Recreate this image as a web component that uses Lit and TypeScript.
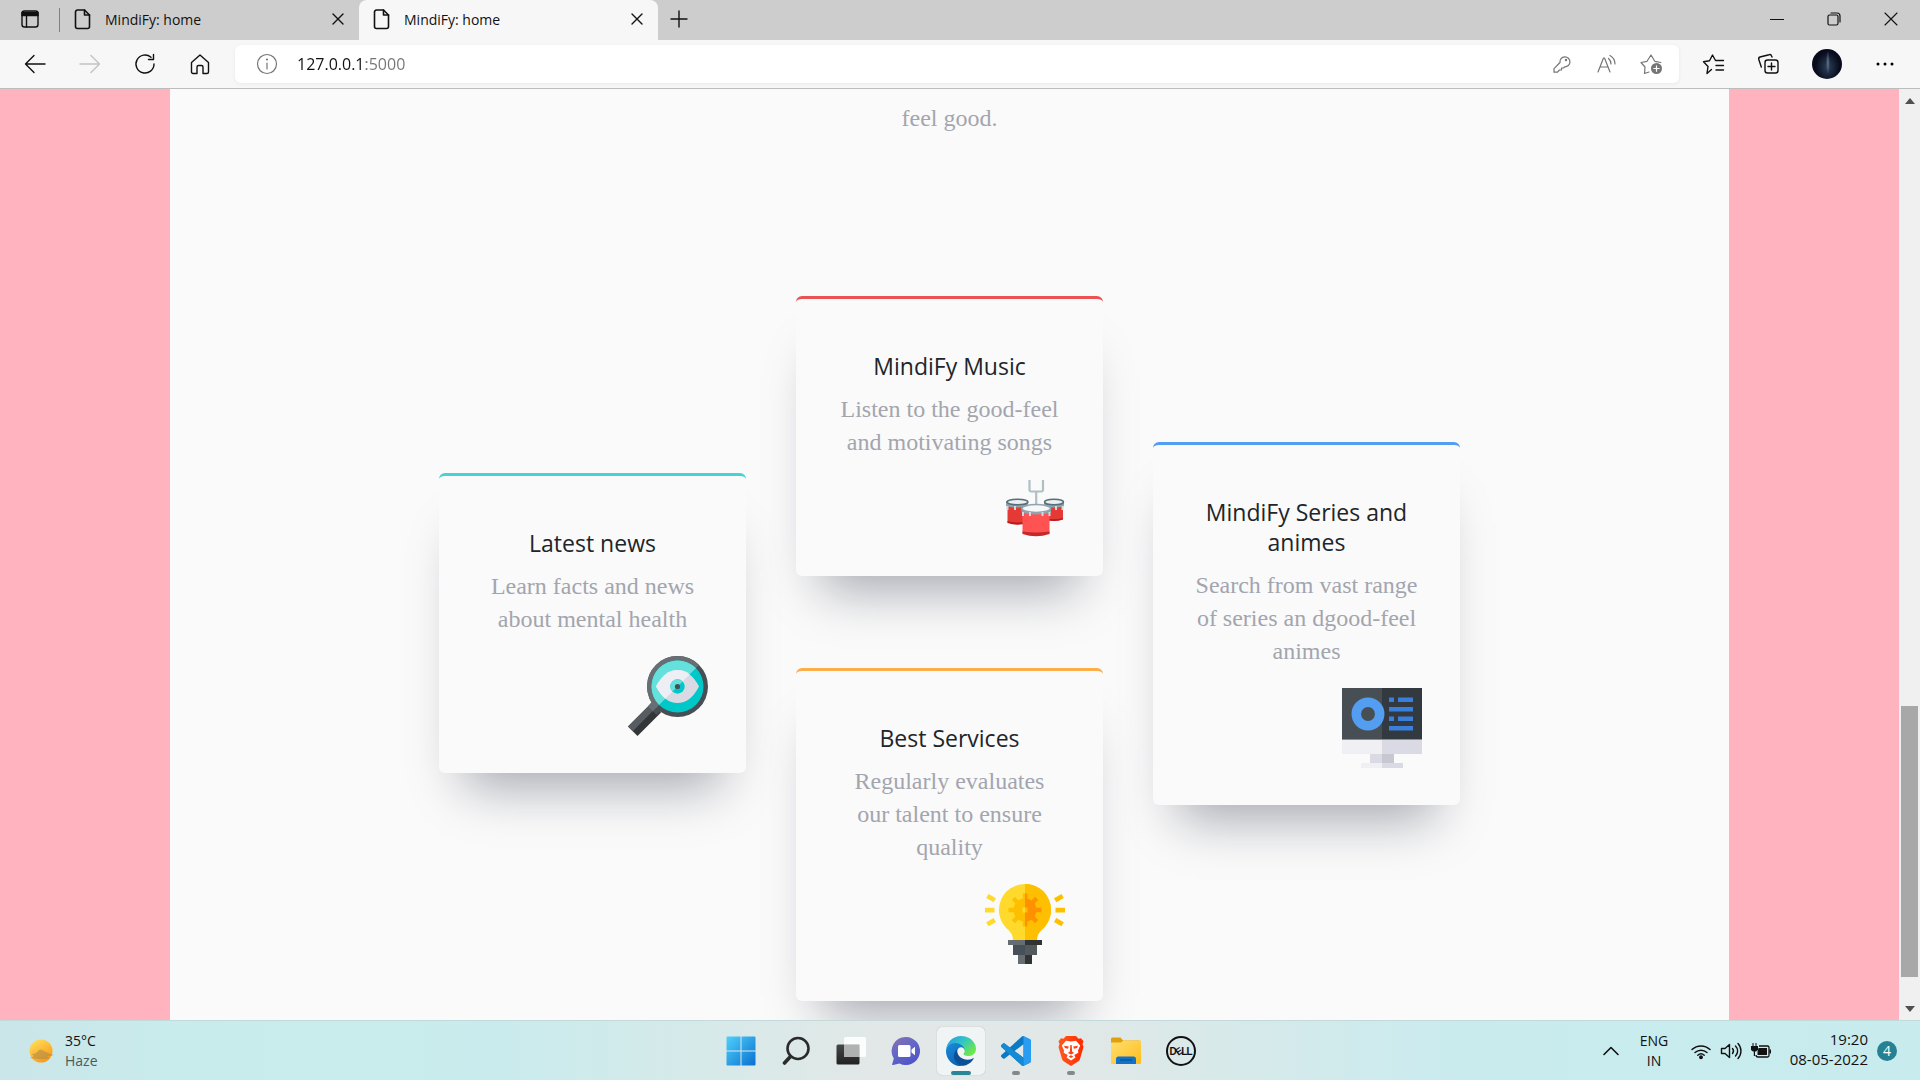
import { LitElement, html, css, svg, type TemplateResult } from "lit";
import { customElement, property } from "lit/decorators.js";

/* ---------- Browser chrome icons ---------- */

const line = (w: number, h: number, body: TemplateResult, sw = 1.4) => html`
  <svg width=${w} height=${h} viewBox="0 0 ${w} ${h}" fill="none" stroke="currentColor"
    stroke-width=${sw} stroke-linecap="round" stroke-linejoin="round" aria-hidden="true">${body}</svg>`;

const icons = {
  tabActions: line(20, 20, svg`<rect x="2" y="2" width="16" height="16" rx="2.5"/><path d="M2 3.5h16v3H2z" fill="currentColor"/><path d="M6.5 6v12"/>`),
  file: line(18, 22, svg`<path d="M3.5 2h7l5 5v11.5a2 2 0 0 1-2 2h-10a2 2 0 0 1-2-2V4a2 2 0 0 1 2-2z"/><path d="M10.5 2v5h5"/>`, 1.6),
  close: line(12, 12, svg`<path d="M1 1l10 10M11 1L1 11"/>`, 1.4),
  plus: line(18, 18, svg`<path d="M9 1v16M1 9h16"/>`, 1.4),
  minimize: line(14, 14, svg`<path d="M.5 7.5h13"/>`, 1.2),
  restore: line(14, 14, svg`<rect x="1" y="3" width="10" height="10" rx="1.5"/><path d="M4 1h6a3 3 0 0 1 3 3v6"/>`, 1.2),
  windowClose: line(14, 14, svg`<path d="M1 1l12 12M13 1L1 13"/>`, 1.1),
  back: line(22, 20, svg`<path d="M21 10H1.5M10 1.5L1.5 10l8.5 8.5"/>`),
  forward: line(22, 20, svg`<path d="M1 10h19.5M12 1.5l8.5 8.5-8.5 8.5"/>`),
  reload: line(22, 22, svg`<path d="M20 11a9 9 0 1 1-3-6.7"/><path d="M19.5 1.5v5h-5"/>`),
  home: line(20, 22, svg`<path d="M1.5 9.5L10 2l8.5 7.5V19a1.5 1.5 0 0 1-1.5 1.5h-4V14a1.5 1.5 0 0 0-1.5-1.5h-3A1.5 1.5 0 0 0 7 14v6.5H3A1.5 1.5 0 0 1 1.5 19z"/>`),
  info: line(22, 22, svg`<circle cx="11" cy="11" r="9.5"/><path d="M11 10v6"/><circle cx="11" cy="6.5" r=".5"/>`, 1.2),
  key: line(20, 20, svg`<path d="M8 8.500a5 5 0 1 1 4.500 4.300l-1 1.200H9.500v2H7.500l-2 2.200H2v-3.500z"/><circle cx="14" cy="6" r=".6"/>`, 1.2),
  read: line(22, 20, svg`<path d="M2 18L7.500 4h1L14 18M4 13h8"/><path d="M12.500 4.500a7 7 0 0 1 2.500 5.500M14 1.500a10 10 0 0 1 5 8.500"/>`, 1.2),
  starAdd: line(24, 22, svg`<path d="M9 19l-4.500 1.500L5 14 1 9.500l6-1.200L11 2l3.800 6.300 6 1.200"/><circle cx="16.500" cy="15.500" r="5.500" fill="currentColor" stroke="none"/><path d="M16.500 12.800v5.400M13.800 15.500h5.400" stroke="#fff"/>`, 1.2),
  favorites: line(24, 22, svg`<path d="M9.500 16.500L5 20.500l1-7-4.500-4.700 6-1L10.500 2l3 5.500h8M14 12.500h7.500M14 17h7.500"/>`),
  collections: line(24, 22, svg`<rect x="8" y="7" width="13" height="13" rx="2.500"/><path d="M14.500 10v7M11 13.500h7M15 4l-.4-1a2 2 0 0 0-2.500-1.300L3 4a2 2 0 0 0-1.200 2.500l2.500 7.500"/>`),
  chevron: line(18, 12, svg`<path d="M2 9.500l7-7 7 7"/>`, 1.6),
  wifi: line(22, 18, svg`<path d="M2 7.500a13 13 0 0 1 18 0M5 10.500a8.800 8.800 0 0 1 12 0M7.800 13.200a4.800 4.800 0 0 1 6.400 0"/><circle cx="11" cy="15.300" r="1.200" fill="currentColor"/>`, 1.5),
  volume: line(22, 18, svg`<path d="M1.500 6.500H5L9.500 2.500v13L5 11.500H1.500z"/><path d="M12.500 6.500a4 4 0 0 1 0 5M15.500 4a7 7 0 0 1 0 10M18 1.500a11 11 0 0 1 0 15"/>`, 1.4),
  battery: html`<svg width="22" height="18" viewBox="0 0 22 18" aria-hidden="true">
    <path d="M9 4h8.500A1.500 1.500 0 0 1 19 5.500v8a1.500 1.500 0 0 1-1.500 1.500H8a2 2 0 0 1-2-2" fill="none" stroke="#111" stroke-width="1.300"/>
    <path d="M8.500 6h8.500v7H7.500v-3z" fill="#111"/><path d="M19.500 7.500H21v4h-1.500z" fill="#111"/>
    <path d="M1 4h1.500V1h1v3h2V1h1v3H8v4L6 9.500H5V14H3.800V9.500H3L1 8z" fill="#111"/></svg>`,
};

/* ---------- Card artwork ---------- */

const newsArt = html`<svg class="art" width="80" height="80" viewBox="0 0 80 80" aria-hidden="true">
  <clipPath id="nw-a"><path d="M0 0H80L0 80z"/></clipPath>
  <circle cx="49.5" cy="30.5" r="30.5" fill="#474f54"/>
  <path d="M0 70.5L23.5 47l9.500 9.500L9.500 80z" fill="#323636"/>
  <path d="M0 70.5L23.5 47l4.500 4.800L4.800 75.200z" fill="#565c61"/>
  <path d="M20 50.5L25 45l9 9-5.500 5z" fill="#474f54"/>
  <g clip-path="url(#nw-a)"><circle cx="49.5" cy="30.5" r="30.5" fill="#676e74"/><path d="M20 50.5L25 45l9 9-5.500 5z" fill="#676e74"/></g>
  <circle cx="49.5" cy="30.5" r="26" fill="#00c8c8"/>
  <g clip-path="url(#nw-a)"><circle cx="49.5" cy="30.5" r="26" fill="#64e1dc"/></g>
  <path d="M28 30.500Q36.500 14 49.500 14t21.500 16.500Q62.500 47 49.500 47T28 30.500z" fill="#dadae4"/>
  <g clip-path="url(#nw-a)"><path d="M28 30.500Q36.500 14 49.500 14t21.500 16.500Q62.500 47 49.500 47T28 30.500z" fill="#eeeff4"/></g>
  <circle cx="49.5" cy="30.5" r="7.2" fill="#00c8c8"/>
  <g clip-path="url(#nw-a)"><circle cx="49.5" cy="30.5" r="7.2" fill="#64e1dc"/></g>
  <circle cx="49.5" cy="30.5" r="2.6" fill="#474f54"/>
</svg>`;

const drumLugs = (xs: number[], y: number) => xs.map((x) => svg`<path d="M${x} ${y}v4" stroke="#cfd8dc" stroke-width="2"/>`);

const musicArt = html`<svg class="art" width="60" height="60" viewBox="0 0 60 60" aria-hidden="true">
  <path d="M24.500 1v10a1.500 1.500 0 0 0 1.500 1.500h10.500A1.500 1.500 0 0 0 38 11V1M31.200 12v14" fill="none" stroke="#b0bec5" stroke-width="2.200"/>
  <path d="M2.500 24h20v19.500q-10 3.500-20 0z" fill="#e53935"/><path d="M2.500 42q10 3 20 0v2q-10 3.500-20 0z" fill="#b71c1c"/>
  <path d="M40 24h18v16q-9 3-18 0z" fill="#e53935"/><path d="M40 39q9 2.500 18 0v1.500q-9 3-18 0z" fill="#b71c1c"/>
  <path d="M1 22h22v5q-11 3-22 0zM39 22h20v5q-10 3-20 0z" fill="#90a4ae"/>
  <ellipse cx="12.500" cy="23" rx="10.500" ry="2.800" fill="#eceff1" stroke="#546e7a" stroke-width="1.500"/>
  <ellipse cx="49" cy="23" rx="9.500" ry="2.800" fill="#eceff1" stroke="#546e7a" stroke-width="1.500"/>
  ${drumLugs([2.5, 10, 51, 57.5], 27)}
  <path d="M17.500 31h27v23q-13.500 4.500-27 0z" fill="#ff5252"/>
  <path d="M17.500 52.500q13.500 2 27 0V55q-13.500 4.500-27 0z" fill="#c62828"/>
  <path d="M16.500 29h29.500v4.500q-14.500 4-29.500 0z" fill="#90a4ae"/>
  <ellipse cx="31.200" cy="29.500" rx="14.300" ry="4" fill="#f5f7f8" stroke="#90a4ae" stroke-width="1.500"/>
  ${drumLugs([18, 25, 37.5, 44.5], 33)}
</svg>`;

const seriesArt = html`<svg class="art" width="80" height="80" viewBox="0 0 80 80" aria-hidden="true">
  <path d="M0 0h40v51H0z" fill="#474f54"/><path d="M40 0h40v51H40z" fill="#32393f"/>
  <path d="M0 52h40v14H0z" fill="#efeff4"/><path d="M40 52h40v14H40z" fill="#dadae4"/>
  <path d="M0 51h80v1H0z" fill="#8d8f98"/>
  <path d="M28 66h12v9H28z" fill="#dadae4"/><path d="M40 66h12v9H40z" fill="#c7c7d2"/>
  <path d="M19 75h21v5H19z" fill="#efeff4"/><path d="M40 75h21v5H40z" fill="#dadae4"/>
  <circle cx="26" cy="26" r="11.700" fill="none" stroke="#549ef2" stroke-width="9.500"/>
  <path d="M47 9.500h5V14h-5zM56 9.500h15V14H56zM47 19h24v4.500H47zM47 28.500h5V33h-5zM56 28.500h15V33H56zM47 38h24v4.500H47z" fill="#3a80db"/>
</svg>`;

const bulb = svg`<path d="M40 0a26 26 0 0 1 18.400 44.400C54 48 52 51 52 56H28c0-5-2-8-6.400-11.600A26 26 0 0 1 40 0z"/>`;
const gear = svg`<circle cx="40" cy="26" r="11.500"/>${[0, 45, 90, 135].map((a) => svg`<path d="M37.800 9.500h4.400v33h-4.400z" transform="rotate(${a} 40 26)"/>`)}`;

const serviceArt = html`<svg class="art" width="80" height="80" viewBox="0 0 80 80" aria-hidden="true">
  <clipPath id="sv-r"><path d="M40 0h40v80H40z"/></clipPath>
  <g fill="#ffda2d">${bulb}<path d="M0 23.800h9.500v4.600H0zM3.500 10l7.500 4.200-2.300 4L1.200 14zM11 38l-2.300-4-7.500 4.200 2.300 4z"/></g>
  <g fill="#fdbf00"><g clip-path="url(#sv-r)">${bulb}</g><path d="M70.500 23.800H80v4.600h-9.500zM76.500 10L69 14.200l2.300 4 7.500-4.200zM69 38l2.300-4 7.500 4.200-2.300 4z"/></g>
  <g fill="#fdbf00">${gear}</g>
  <g fill="#ff9100" clip-path="url(#sv-r)">${gear}</g>
  <path d="M37.500 23.500H40v5h-2.500z" fill="#ffda2d"/><path d="M40 23.500h2.500v5H40z" fill="#fdbf00"/>
  <path d="M23 56h17v5H23zM33 71h7v9h-7z" fill="#656d73"/><path d="M40 56h17v5H40zM40 71h7v9h-7z" fill="#313434"/>
  <path d="M28 61h12v10H28z" fill="#474f58"/><path d="M40 61h12v10H40z" fill="#54595c"/>
</svg>`;

/* ---------- Taskbar icons ---------- */

const startIcon = html`<svg width="30" height="30" viewBox="0 0 30 30" aria-hidden="true">
  <linearGradient id="st" x1="0" y1="0" x2="1" y2="1"><stop offset="0" stop-color="#4fd0fb"/><stop offset="1" stop-color="#0a70d0"/></linearGradient>
  <path d="M1.500.5H14.500V14.500H.5V1.500a1 1 0 0 1 1-1zM15.500.5h13a1 1 0 0 1 1 1v13h-14zM.5 15.500h14v14h-13a1 1 0 0 1-1-1zM15.500 15.500h14v13a1 1 0 0 1-1 1h-13z" fill="url(#st)"/></svg>`;

const searchIcon = html`<svg width="28" height="30" viewBox="0 0 28 30" fill="none" stroke="#2b2b2b" aria-hidden="true">
  <circle cx="16" cy="12.500" r="10.500" stroke-width="2.600"/><path d="M8.500 20.500L2.500 27" stroke-width="3.600" stroke-linecap="round"/></svg>`;

const taskViewIcon = html`<svg width="30" height="30" viewBox="0 0 30 30" aria-hidden="true">
  <linearGradient id="tv" x1="0" y1="0" x2="0" y2="1"><stop offset="0" stop-color="#474747"/><stop offset="1" stop-color="#222"/></linearGradient>
  <rect x=".5" y="8.500" width="23" height="20" rx="1.500" fill="url(#tv)"/>
  <rect x="8" y="1" width="22" height="20" rx="1.500" fill="#fff" fill-opacity=".85"/>
  <path d="M8 8.500h15.500V21H8z" fill="#b1b1b1"/></svg>`;

const chatIcon = html`<svg width="30" height="30" viewBox="0 0 30 30" aria-hidden="true">
  <linearGradient id="ch" x1="0" y1="0" x2=".6" y2="1"><stop offset="0" stop-color="#8a72ac"/><stop offset=".5" stop-color="#6468c8"/><stop offset="1" stop-color="#4f55c8"/></linearGradient>
  <path d="M15 1a14 14 0 1 1-6.500 26.400L2 29q-1.200.1-.8-1l1.600-5.600A14 14 0 0 1 15 1z" fill="url(#ch)"/>
  <rect x="7" y="9" width="12.500" height="12" rx="1.500" fill="#fff"/><path d="M20.500 13.500L24 10.800v8.400l-3.500-2.700z" fill="#fff"/></svg>`;

const edgeIcon = html`<svg width="30" height="30" viewBox="0 0 256 256" aria-hidden="true">
  <linearGradient id="e1" x1=".2" y1="0" x2="1" y2=".6"><stop offset="0" stop-color="#2b9fe0"/><stop offset=".45" stop-color="#30c6c4"/><stop offset="1" stop-color="#6be64d"/></linearGradient>
  <linearGradient id="e2" x1="0" y1="0" x2=".5" y2="1"><stop offset="0" stop-color="#1b8fdc"/><stop offset="1" stop-color="#0a63b5"/></linearGradient>
  <path d="M231.100 190.500c-3.400 1.800-6.900 3.400-10.500 4.700a101.200 101.200 0 0 1-35.900 6.500c-47.300 0-88.500-32.500-88.500-74.300.1-11.400 6.400-21.900 16.400-27.300-42.800 1.800-53.800 46.400-53.800 72.500 0 73.900 68.100 81.400 82.800 81.400 7.900 0 19.800-2.300 27-4.600l1.300-.4A128.300 128.300 0 0 0 236 194.100c1.200-2 .3-4.600-1.700-5.400-1-.5-2.200-.3-3.200.3z" fill="#0d4f97"/>
  <path d="M105.700 241.400a79.200 79.200 0 0 1-22.700-21.300 80.700 80.700 0 0 1 29.500-120c3.200-1.500 8.500-4.100 15.600-4 10.100.1 19.500 4.900 25.600 13a32.300 32.300 0 0 1 6.400 18.700c0-.2 24.500-79.600-80-79.600-43.900 0-80 41.700-80 78.200-.2 19.300 4 38.400 12.100 56 27.600 58.800 94.800 87.600 156.400 67.100a75.300 75.300 0 0 1-62.900-8.100z" fill="url(#e2)"/>
  <path d="M152.300 148.900c-.9 1-3.400 2.500-3.400 5.600 0 2.600 1.700 5.100 4.700 7.200 14.400 10 41.500 8.700 41.600 8.700 10.700 0 21.100-2.900 30.300-8.300A61.400 61.400 0 0 0 256 109c.3-22.400-8-37.300-11.300-43.900C223.500 23.900 177.700 0 128 0 58 0 1 56.200 0 126.200c.5-36.500 36.800-66 80-66 3.500 0 23.500.3 42 10 16.300 8.600 24.900 19 30.800 29.200 6.200 10.700 7.300 24.200 7.300 29.500 0 5.400-2.700 13.300-7.800 20z" fill="url(#e1)"/></svg>`;

const codeIcon = html`<svg width="30" height="30" viewBox="0 0 24 24" aria-hidden="true">
  <path d="M23.150 2.587L18.210.21a1.494 1.494 0 0 0-1.705.29l-9.460 8.630-4.120-3.128a.999.999 0 0 0-1.276.057L.327 7.261A1 1 0 0 0 .326 8.740L3.899 12 .326 15.260a1 1 0 0 0 .001 1.479L1.650 17.940a.999.999 0 0 0 1.276.057l4.120-3.128 9.460 8.630a1.492 1.492 0 0 0 1.704.29l4.942-2.377A1.500 1.500 0 0 0 24 20.060V3.939a1.500 1.500 0 0 0-.85-1.352zm-5.146 14.861L10.826 12l7.178-5.448v10.896z" fill="#0a79c6"/>
  <path d="M.327 7.261L1.650 6.059a1 1 0 0 1 1.276-.057L18 17.448v6.400a1.500 1.500 0 0 1-1.500-.35L.326 8.740a1 1 0 0 1 .001-1.479z" fill="#1489d4"/>
  <path d="M18 .15l5.150 2.437A1.500 1.500 0 0 1 24 3.940v16.120a1.500 1.500 0 0 1-.85 1.350L18 23.850z" fill="#2a9df0"/></svg>`;

const braveIcon = html`<svg width="26" height="30" viewBox="0 0 26 30" aria-hidden="true">
  <linearGradient id="br" x1="0" y1="0" x2="1" y2="0"><stop offset="0" stop-color="#ff5a1f"/><stop offset="1" stop-color="#ff2a00"/></linearGradient>
  <path d="M8 0h10l2.500 2.800 2.500-.5 2.500 3-1 2.700 1 3-3.500 12q-.5 1.500-2 2.600L13 30l-7-4.400q-1.500-1.100-2-2.600L.5 11l1-3-1-2.700 2.500-3 2.500.5z" fill="url(#br)"/>
  <path d="M8 4.800l5 .8 5-.8 4.200 4.700-2.200 5 .3 2.200-4 2.300 1.200 2.500L13 24.500l-4.500-3 1.200-2.500-4-2.300.3-2.200-2.200-5z" fill="#fff"/>
  <path d="M6 9.800l4.800.8-.8 2.200-3-.8zM20 9.800l-4.800.8.8 2.200 3-.8zM12.300 9h1.400l.4 6.500 2 1.500-3.100 1.400L9.900 17l2-1.500zM10.700 20.500l2.300-1.200 2.300 1.200-2.300 1.600z" fill="#ff4212"/></svg>`;

const folderIcon = html`<svg width="30" height="28" viewBox="0 0 30 28" aria-hidden="true">
  <linearGradient id="fo" x1="0" y1="0" x2="1" y2="1"><stop offset="0" stop-color="#ffdf6e"/><stop offset="1" stop-color="#fdbd1e"/></linearGradient>
  <path d="M0 2a1.500 1.500 0 0 1 1.500-1.500h8L12 3.500h16.500V10H0z" fill="#e19f0b"/>
  <path d="M0 5.500h10l2.500-2H29a1 1 0 0 1 1 1V26a1 1 0 0 1-1 1H1a1 1 0 0 1-1-1z" fill="url(#fo)"/>
  <path d="M5 27v-5a2.500 2.500 0 0 1 2.500-2.500h15A2.500 2.500 0 0 1 25 22v5z" fill="#1272c8"/><path d="M9 23h12" stroke="#0a4f96" stroke-width="1.200"/></svg>`;

const dellIcon = html`<svg width="30" height="30" viewBox="0 0 30 30" font-family="Liberation Sans, sans-serif" font-weight="700" font-size="10" fill="#111" aria-hidden="true">
  <circle cx="15" cy="15" r="14" fill="none" stroke="#111" stroke-width="2"/>
  <text x="3.500" y="18.600">D</text><text x="9.500" y="18.600" transform="rotate(-35 13 15)">E</text><text x="15.200" y="18.600">L</text><text x="20.500" y="18.600">L</text></svg>`;

interface TaskApp { name: string; icon: TemplateResult; state: "" | "open" | "active"; }

const apps: TaskApp[] = [
  { name: "Start", icon: startIcon, state: "" },
  { name: "Search", icon: searchIcon, state: "" },
  { name: "Task view", icon: taskViewIcon, state: "" },
  { name: "Chat", icon: chatIcon, state: "" },
  { name: "Microsoft Edge", icon: edgeIcon, state: "active" },
  { name: "Visual Studio Code", icon: codeIcon, state: "open" },
  { name: "Brave", icon: braveIcon, state: "open" },
  { name: "File Explorer", icon: folderIcon, state: "" },
  { name: "Dell", icon: dellIcon, state: "" },
];

/* ---------- Feature card ---------- */

@customElement("feature-card")
export class FeatureCard extends LitElement {
  @property() heading = "";
  @property() text = "";
  @property({ reflect: true }) accent = "cyan";
  @property({ attribute: false }) art?: TemplateResult;

  static styles = css`
    :host { display: block; }
    .card {
      box-sizing: border-box;
      display: flex;
      flex-direction: column;
      padding: 52px 38px 37px;
      border-top: 3px solid #45d3d3;
      border-radius: 6px;
      background: #fafafa;
      box-shadow: 0 38px 50px -25px #a3a5ae;
      text-align: center;
    }
    :host([accent="red"]) .card { border-top-color: #ea5353; }
    :host([accent="blue"]) .card { border-top-color: #549ef2; }
    :host([accent="orange"]) .card { border-top-color: #fcae4a; }
    h4 {
      margin: 0 0 12px;
      font: 400 23px/30px "Open Sans", "Noto Sans", sans-serif;
      color: #212529;
    }
    p {
      margin: 0 0 20px;
      padding: 0 3px;
      font: 400 24px/33px "Liberation Serif", serif;
      color: #a3a5ae;
    }
    .art { display: block; align-self: flex-end; }
  `;

  render() {
    return html`<article class="card"><h4>${this.heading}</h4><p>${this.text}</p>${this.art}</article>`;
  }
}

/* ---------- Desktop ---------- */

@customElement("app-root")
export class AppRoot extends LitElement {
  static styles = css`
    :host {
      display: flex;
      flex-direction: column;
      height: 100vh;
      overflow: hidden;
      font-family: "Open Sans", "Noto Sans", sans-serif;
      font-size: 14px;
      color: #111;
    }
    button {
      display: flex;
      align-items: center;
      justify-content: center;
      padding: 0;
      border: 0;
      background: none;
      color: inherit;
      font: inherit;
    }
    svg { display: block; flex: none; }

    .tabs { display: flex; flex: none; height: 40px; background: #cdcdcd; }
    .tabs > button, .window-controls button { padding-bottom: 2px; }
    .tab-actions { width: 59px; }
    .divider { width: 1px; height: 24px; margin: 8px 0; background: #808080; }
    .tab {
      box-sizing: border-box;
      display: flex;
      align-items: center;
      gap: 13px;
      width: 299px;
      padding: 0 9px 2px 14px;
    }
    .tab.current { border-radius: 8px 8px 0 0; background: #f7f7f7; }
    .tab-title { flex: 1; }
    .tab-close { width: 24px; height: 24px; }
    .new-tab { width: 42px; }
    .window-controls { display: flex; margin-left: auto; padding-right: 1px; }
    .window-controls button { width: 57px; }

    .toolbar {
      box-sizing: border-box;
      display: flex;
      align-items: center;
      flex: none;
      gap: 15px;
      height: 49px;
      padding: 0 15px 0 15px;
      border-bottom: 1px solid #bcbcbc;
      background: #f7f7f7;
    }
    .tool { width: 40px; height: 40px; }
    .tool.disabled { color: #c4c4c4; }
    .address {
      box-sizing: border-box;
      display: flex;
      align-items: center;
      flex: 1;
      gap: 15px;
      height: 38px;
      padding: 0 12px 0 17px;
      border-radius: 6px;
      background: #fff;
      box-shadow: 0 1px 4px #0000000f;
      color: #757575;
    }
    .address button { width: 30px; height: 30px; }
    .address input {
      flex: 1;
      min-width: 0;
      padding: 0;
      border: 0;
      outline: 0;
      font: 16px/24px "Open Sans", "Noto Sans", sans-serif;
      color: transparent;
      background: linear-gradient(90deg, #111 69px, #757575 69px);
      -webkit-background-clip: text;
      background-clip: text;
    }
    .profile { width: 46px; height: 40px; }
    .avatar {
      width: 30px;
      height: 30px;
      border-radius: 50%;
      background:
        radial-gradient(ellipse 2px 12px at 53% 45%, #66758c, transparent),
        radial-gradient(ellipse 12px 16px at 52% 60%, #2c4058, transparent),
        #070b1c;
    }

    .viewport { display: flex; flex: 1; min-height: 0; overflow: hidden; }
    .page {
      flex: 1;
      min-width: 0;
      padding: 0 170px;
      background: #ffb3bf;
    }
    .content {
      box-sizing: border-box;
      height: 100%;
      padding-top: 13px;
      background: #fafafa;
    }
    .intro {
      margin: 0 0 161px;
      text-align: center;
      font: 24px/33px "Liberation Serif", serif;
      color: #a3a5ae;
    }
    .cards {
      display: grid;
      grid-template-columns: repeat(3, 307px);
      align-items: center;
      justify-content: center;
      gap: 50px;
    }
    .column { display: flex; flex-direction: column; gap: 92px; }
    .column.raised { padding-bottom: 51px; }

    .scrollbar {
      display: flex;
      flex-direction: column;
      align-items: center;
      flex: none;
      width: 21px;
      background: #f0f0f0;
    }
    .scrollbar button { width: 21px; height: 23px; }
    .before { flex: 595; }
    .thumb { flex: 271; width: 17px; background: #a8a8a8; }
    .after { flex: 20; }

    .taskbar {
      box-sizing: border-box;
      display: grid;
      grid-template-columns: 1fr auto 1fr;
      align-items: center;
      flex: none;
      height: 60px;
      padding: 0 23px 0 25px;
      border-top: 1px solid #c3dadb;
      background: linear-gradient(90deg, #cbe5e9 0, #c8ecec 10%, #c9ebed 26%, #e1e8e7 45%, #e1e8e7 56%, #c9ebee 76%, #c8ecee 100%);
      line-height: 20px;
    }
    .weather { justify-self: start; gap: 10px; text-align: left; }
    .weather .sky { display: block; color: #4b5b5d; }
    .apps { display: flex; gap: 7px; }
    .app {
      box-sizing: border-box;
      display: grid;
      grid-template-rows: 1fr 4px;
      justify-items: center;
      width: 48px;
      height: 48px;
      padding-top: 4px;
      border-radius: 5px;
    }
    .app svg { align-self: center; }
    .app::after { content: ""; height: 4px; border-radius: 2px; }
    .app.open::after { width: 8px; background: #858788; }
    .app.active { background: #f1f4f4; box-shadow: 0 0 1px #0005; }
    .app.active::after { width: 20px; background: #2a8596; }
    .tray { display: flex; align-items: center; justify-self: end; }
    .chevron { width: 40px; height: 40px; }
    .language { width: 46px; text-align: center; }
    .status { gap: 8px; margin: 0 11px 0 13px; }
    .clock { width: 85px; padding-bottom: 4px; text-align: right; font-size: 15px; }
    .clock time { display: block; }
    .badge {
      width: 20px;
      height: 20px;
      margin-left: 9px;
      border-radius: 50%;
      background: #268293;
      color: #fff;
    }
  `;

  private tab(current: boolean) {
    return html`<div class="tab ${current ? "current" : ""}">
      ${icons.file}<span class="tab-title">MindiFy: home</span>
      <button class="tab-close" aria-label="Close tab">${icons.close}</button>
    </div>`;
  }

  render() {
    return html`
      <header class="tabs">
        <button class="tab-actions" aria-label="Tab actions menu">${icons.tabActions}</button>
        <span class="divider"></span>
        ${this.tab(false)}${this.tab(true)}
        <button class="new-tab" aria-label="New tab">${icons.plus}</button>
        <div class="window-controls">
          <button aria-label="Minimize">${icons.minimize}</button>
          <button aria-label="Restore">${icons.restore}</button>
          <button aria-label="Close">${icons.windowClose}</button>
        </div>
      </header>

      <nav class="toolbar">
        <button class="tool" aria-label="Back">${icons.back}</button>
        <button class="tool disabled" aria-label="Forward">${icons.forward}</button>
        <button class="tool" aria-label="Refresh">${icons.reload}</button>
        <button class="tool" aria-label="Home">${icons.home}</button>
        <div class="address">
          <button aria-label="View site information">${icons.info}</button>
          <input type="text" aria-label="Address" value="127.0.0.1:5000" />
          <button aria-label="Saved passwords">${icons.key}</button>
          <button aria-label="Read aloud">${icons.read}</button>
          <button aria-label="Add to favorites">${icons.starAdd}</button>
        </div>
        <button class="tool" aria-label="Favorites">${icons.favorites}</button>
        <button class="tool" aria-label="Collections">${icons.collections}</button>
        <button class="profile" aria-label="Profile"><span class="avatar"></span></button>
        <button class="tool" aria-label="Settings and more">
          <svg width="18" height="4" viewBox="0 0 18 4" aria-hidden="true"><circle cx="2" cy="2" r="1.500"/><circle cx="9" cy="2" r="1.500"/><circle cx="16" cy="2" r="1.500"/></svg>
        </button>
      </nav>

      <div class="viewport">
        <main class="page">
          <div class="content">
            <p class="intro">feel good.</p>
            <section class="cards">
              <div class="column raised">
                <feature-card accent="cyan" heading="Latest news" text="Learn facts and news about mental health" .art=${newsArt}></feature-card>
              </div>
              <div class="column">
                <feature-card accent="red" heading="MindiFy Music" text="Listen to the good-feel and motivating songs" .art=${musicArt}></feature-card>
                <feature-card accent="orange" heading="Best Services" text="Regularly evaluates our talent to ensure quality" .art=${serviceArt}></feature-card>
              </div>
              <div class="column raised">
                <feature-card accent="blue" heading="MindiFy Series and animes" text="Search from vast range of series an dgood-feel animes" .art=${seriesArt}></feature-card>
              </div>
            </section>
          </div>
        </main>
        <div class="scrollbar">
          <button aria-label="Scroll up"><svg width="10" height="6" viewBox="0 0 10 6" aria-hidden="true"><path d="M5 0l5 6H0z" fill="#505050"/></svg></button>
          <span class="before"></span><span class="thumb"></span><span class="after"></span>
          <button aria-label="Scroll down"><svg width="10" height="6" viewBox="0 0 10 6" aria-hidden="true"><path d="M5 6l5-6H0z" fill="#505050"/></svg></button>
        </div>
      </div>

      <footer class="taskbar">
        <button class="weather">
          <svg width="30" height="28" viewBox="0 0 30 28" aria-hidden="true">
            <linearGradient id="sun" x1=".2" y1="0" x2=".8" y2="1"><stop offset="0" stop-color="#fede5c"/><stop offset="1" stop-color="#f9950f"/></linearGradient>
            <circle cx="16" cy="14" r="11.500" fill="url(#sun)"/>
            <path d="M7 17q4 0 6-3t6 0l5 2.500 5 1.500-7 1.500 3 1.500q-5 2-12 1l-8-1 4-1.500z" fill="#b08a4c" fill-opacity=".6"/>
          </svg>
          <span>35°C<span class="sky">Haze</span></span>
        </button>
        <div class="apps">
          ${apps.map((a) => html`<button class="app ${a.state}" aria-label=${a.name}>${a.icon}</button>`)}
        </div>
        <div class="tray">
          <button class="chevron" aria-label="Show hidden icons">${icons.chevron}</button>
          <button class="language">ENG<br />IN</button>
          <button class="status" aria-label="Network, volume and battery">${icons.wifi}${icons.volume}${icons.battery}</button>
          <div class="clock"><time>19:20</time><time>08-05-2022</time></div>
          <button class="badge" aria-label="4 notifications">4</button>
        </div>
      </footer>
    `;
  }
}
